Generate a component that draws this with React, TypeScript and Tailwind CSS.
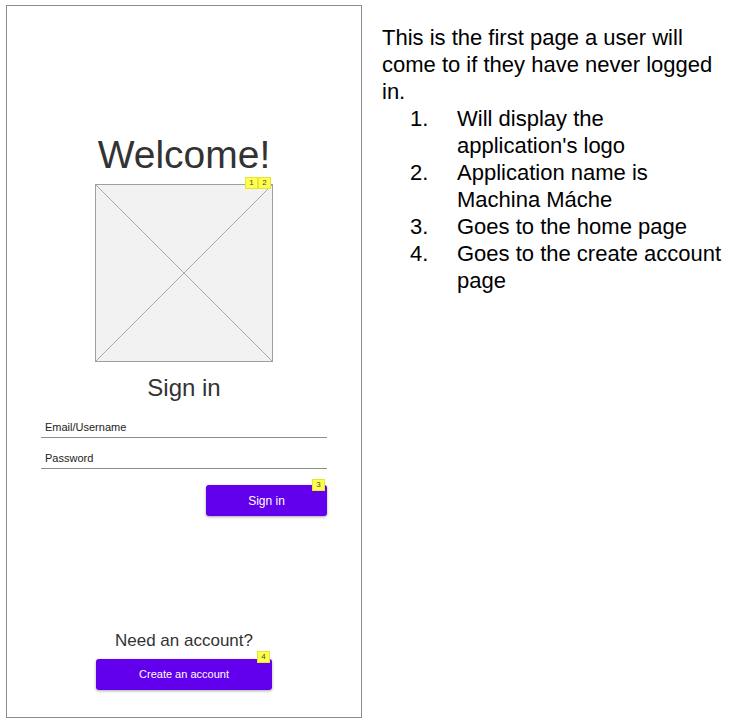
import React from 'react'

function Badge({ n }: { n: string }) {
  return (
    <span className="flex h-[10px] w-[11px] items-center justify-center bg-[#ffff4d] text-[8px] leading-none text-[#444] outline outline-1 outline-[#e6e62e]">
      {n}
    </span>
  )
}

function LogoPlaceholder() {
  return (
    <div className="relative h-[178px] w-[178px] border border-[#9e9e9e] bg-[#f2f2f2]">
      <svg className="absolute inset-0" width="176" height="176" viewBox="0 0 176 176">
        <line x1="0" y1="0" x2="176" y2="176" stroke="#a8a8a8" strokeWidth="1" />
        <line x1="176" y1="0" x2="0" y2="176" stroke="#a8a8a8" strokeWidth="1" />
      </svg>
      <div className="absolute -top-[7px] right-[2px] flex gap-[2px]">
        <Badge n="1" />
        <Badge n="2" />
      </div>
    </div>
  )
}

const notes = [
  ['Will display the', "application's logo"],
  ['Application name is', 'Machina Máche'],
  ['Goes to the home page'],
  ['Goes to the create account', 'page'],
]

export default function App() {
  return (
    <div className="flex h-[723px] w-[752px] bg-white" style={{ fontFamily: '"Liberation Sans", Arial, sans-serif' }}>
      {/* Phone frame */}
      <div className="ml-[6px] mt-[5px] flex h-[713px] w-[356px] flex-col items-center border border-[#8c8c8c]">
        <h1 className="mt-[129px] text-[39px] leading-none text-[#333]">Welcome!</h1>
        <div className="mt-[10px]">
          <LogoPlaceholder />
        </div>
        <h2 className="mt-[14px] text-[24px] leading-none text-[#333]">Sign in</h2>

        <div className="mt-[22px] flex w-[286px] flex-col">
          <div className="border-b border-[#8c8c8c] pb-[4px] pl-[4px] text-[11px] leading-none text-[#222]">Email/Username</div>
          <div className="mt-[15px] border-b border-[#8c8c8c] pb-[4px] pl-[4px] text-[11px] leading-none text-[#222]">Password</div>
          <div className="mt-[16px] flex justify-end">
            <button className="relative h-[31px] w-[121px] rounded-[3px] bg-[#6200ee] text-[12px] text-white shadow-[0_1px_3px_rgba(0,0,0,0.35)]">
              Sign in
              <span className="absolute -top-[5px] right-[3px]">
                <Badge n="3" />
              </span>
            </button>
          </div>
        </div>

        <div className="mt-auto flex flex-col items-center pb-[27px]">
          <p className="text-[17px] leading-none text-[#333]">Need an account?</p>
          <button className="relative mt-[10px] h-[31px] w-[176px] rounded-[3px] bg-[#6200ee] text-[11px] text-white shadow-[0_1px_3px_rgba(0,0,0,0.35)]">
            Create an account
            <span className="absolute -top-[7px] right-[3px]">
              <Badge n="4" />
            </span>
          </button>
        </div>
      </div>

      {/* Notes */}
      <div className="ml-[20px] mt-[24px] text-[22px] leading-[27px] text-black">
        <p>This is the first page a user will</p>
        <p>come to if they have never logged</p>
        <p>in.</p>
        <ol>
          {notes.map((lines, i) => (
            <li key={i} className="flex">
              <span className="ml-[28px] w-[47px] shrink-0">{i + 1}.</span>
              <div>
                {lines.map(l => (
                  <div key={l}>{l}</div>
                ))}
              </div>
            </li>
          ))}
        </ol>
      </div>
    </div>
  )
}
